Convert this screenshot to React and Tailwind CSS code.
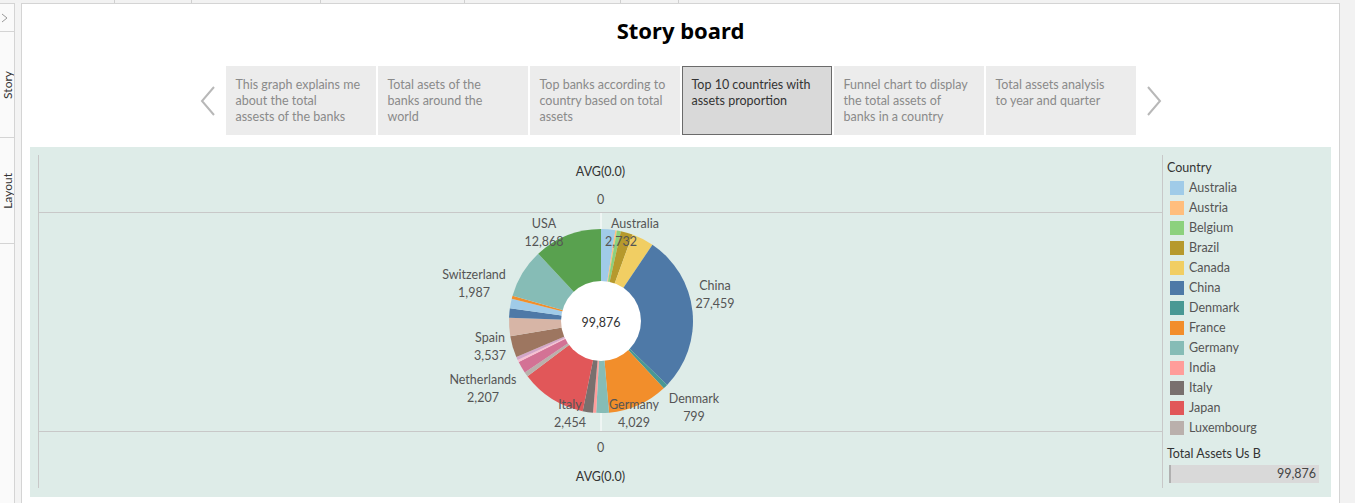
import React from 'react';

const FONT = "font-['Lato','Noto_Sans',sans-serif]";

const storyPoints = [
  ['This graph explains me', 'about the total', 'assests of the banks'],
  ['Total asets of the', 'banks around the', 'world'],
  ['Top banks according to', 'country based on total', 'assets'],
  ['Top 10 countries with', 'assets proportion'],
  ['Funnel chart to display', 'the total assets of', 'banks in a country'],
  ['Total assets analysis', 'to year and quarter'],
];

const legend = [
  ['Australia', '#a0cbe8'],
  ['Austria', '#ffbe7d'],
  ['Belgium', '#8cd17d'],
  ['Brazil', '#b6992d'],
  ['Canada', '#f1ce63'],
  ['China', '#4e79a7'],
  ['Denmark', '#499894'],
  ['France', '#f28e2b'],
  ['Germany', '#86bcb6'],
  ['India', '#ff9d9a'],
  ['Italy', '#79706e'],
  ['Japan', '#e15759'],
  ['Luxembourg', '#bab0ac'],
];

// slice boundaries in degrees, clockwise from 12 o'clock
const slices = [
  [0, 9, '#a0cbe8'],
  [9, 10, '#ffbe7d'],
  [10, 12.5, '#8cd17d'],
  [12.5, 20, '#b6992d'],
  [20, 34, '#f1ce63'],
  [34, 134, '#4e79a7'],
  [134, 137, '#499894'],
  [137, 175, '#f28e2b'],
  [175, 183, '#86bcb6'],
  [183, 185, '#ff9d9a'],
  [185, 191.5, '#79706e'],
  [191.5, 233, '#e15759'],
  [233, 236, '#bab0ac'],
  [236, 243.5, '#d37295'],
  [243.5, 245, '#fabfd2'],
  [245, 247, '#d4a6c8'],
  [247, 260.5, '#9d7660'],
  [260.5, 272, '#d7b5a6'],
  [272, 278, '#4e79a7'],
  [278, 284, '#a0cbe8'],
  [284, 286, '#f28e2b'],
  [286, 317, '#86bcb6'],
  [317, 360, '#59a14f'],
];

const labels = [
  ['USA', '12,868', 143, 12],
  ['Australia', '2,732', 234, 12, 220],
  ['China', '27,459', 314, 74],
  ['Switzerland', '1,987', 73, 63],
  ['Spain', '3,537', 89, 126],
  ['Netherlands', '2,207', 82, 168],
  ['Italy', '2,454', 169, 193],
  ['Germany', '4,029', 233, 193],
  ['Denmark', '799', 293, 187],
];

const cx = 200;
const cy = 108;
const oR = 92;
const iR = 40;
const RADIAN = Math.PI / 180;

function slicePath(a0, a1) {
  const pt = (a) => [cx + oR * Math.sin(a * RADIAN), cy - oR * Math.cos(a * RADIAN)];
  const [x0, y0] = pt(a0);
  const [x1, y1] = pt(a1);
  const large = a1 - a0 > 180 ? 1 : 0;
  return `M${cx} ${cy} L${x0} ${y0} A${oR} ${oR} 0 ${large} 1 ${x1} ${y1} Z`;
}

function Chevron({ dir }) {
  return (
    <svg width="16" height="30" viewBox="0 0 16 30">
      <path
        d={dir === 'left' ? 'M14 1 L2 15 L14 29' : 'M2 1 L14 15 L2 29'}
        fill="none"
        stroke="#b8b8b8"
        strokeWidth="2"
      />
    </svg>
  );
}

function DonutChart() {
  return (
    <svg width="400" height="218" viewBox="0 0 400 218">
      <line x1="200" y1="0" x2="200" y2="218" stroke="#ffffff" strokeWidth="1" />
      {slices.map(([a0, a1, color], i) => (
        <path key={i} d={slicePath(a0, a1)} fill={color} />
      ))}
      <circle cx={cx} cy={cy} r={iR} fill="#ffffff" />
      <text x={cx} y={cy + 3} textAnchor="middle" dominantBaseline="middle" fontSize="12.5" fill="#333">
        99,876
      </text>
      {labels.map(([name, value, x, y, vx]) => (
        <g key={name} fontSize="12.5" fill="#555" textAnchor="middle">
          <text x={x} y={y} dominantBaseline="middle">{name}</text>
          <text x={vx || x} y={y + 18} dominantBaseline="middle">{value}</text>
        </g>
      ))}
    </svg>
  );
}

function SideTab({ label, className }) {
  return (
    <div className={`flex items-center justify-center overflow-hidden border-b border-[#d4d4d4] ${className}`}>
      <span className="[writing-mode:vertical-rl] rotate-180 text-[12px] leading-[13px] text-[#333] whitespace-nowrap">
        {label}
      </span>
    </div>
  );
}

export default function App() {
  const ticks = [114, 191, 320, 464, 620, 678];

  return (
    <div className={`w-[1355px] h-[503px] bg-[#f2f2f2] flex flex-col overflow-hidden ${FONT}`}>
      {/* top strip */}
      <div className="h-[3px] relative">
        {ticks.map((x) => (
          <div key={x} className="absolute top-0 h-[3px] w-px bg-[#d0d0d0]" style={{ left: x }} />
        ))}
      </div>

      <div className="flex flex-1 min-h-0">
        {/* side tabs */}
        <div className="w-[15px] bg-[#fafafa] border-r border-t border-[#d4d4d4] flex flex-col">
          <div className="h-[28px] flex items-center justify-start pl-[1px] border-b border-[#d4d4d4] overflow-hidden">
            <svg width="8" height="10" viewBox="0 0 8 10">
              <path d="M1 1 L6 5 L1 9" fill="none" stroke="#999" strokeWidth="1" />
            </svg>
          </div>
          <SideTab label="Story" className="h-[106px]" />
          <SideTab label="Layout" className="h-[106px]" />
        </div>
        <div className="w-[7px] bg-[#f3f3f3] border-r border-[#d4d4d4]" />

        {/* main story panel */}
        <div className="w-[1318px] bg-white border-t border-r border-[#d4d4d4] flex flex-col">
          <div className="mt-[12px] h-[28px] leading-[28px] text-center text-[22px] font-bold text-black font-['Noto_Sans',sans-serif]">
            Story board
          </div>

          {/* story points */}
          <div className="mt-[22px] h-[69px] flex items-center justify-center">
            <div className="mr-[10px] flex items-center">
              <Chevron dir="left" />
            </div>
            <div className="flex gap-[2px] h-full">
              {storyPoints.map((lines, i) => {
                const active = i === 3;
                return (
                  <div
                    key={i}
                    className={
                      active
                        ? 'w-[150px] h-full bg-[#d9d9d9] border border-[#6b6b6b] pl-[9px] pt-[10px] text-[#333]'
                        : 'w-[150px] h-full bg-[#ececec] pl-[10px] pt-[11px] text-[#8a8a8a]'
                    }
                  >
                    {lines.map((l) => (
                      <div key={l} className="text-[12.5px] leading-[16px] whitespace-nowrap">
                        {l}
                      </div>
                    ))}
                  </div>
                );
              })}
            </div>
            <div className="ml-[10px] flex items-center">
              <Chevron dir="right" />
            </div>
          </div>

          {/* viz */}
          <div className="mt-[12px] mx-[8px] h-[350px] bg-[#deece8] pl-[8px] pt-[8px] pb-[9px] flex">
            <div className="w-[1125px] h-full border-l border-r border-[#c8c8c8] flex flex-col">
              <div className="h-[58px] border-b border-[#c8c8c8] flex flex-col items-center text-[12.5px]">
                <div className="mt-[8px] h-[18px] leading-[18px] text-[#333]">AVG(0.0)</div>
                <div className="mt-[10px] h-[18px] leading-[18px] text-[#555]">0</div>
              </div>
              <div className="h-[219px] border-b border-[#c8c8c8] flex justify-center">
                <DonutChart />
              </div>
              <div className="flex-1 flex flex-col items-center text-[12.5px]">
                <div className="mt-[7px] h-[18px] leading-[18px] text-[#555]">0</div>
                <div className="mt-[11px] h-[18px] leading-[18px] text-[#333]">AVG(0.0)</div>
              </div>
            </div>

            {/* legend */}
            <div className="w-[168px] flex flex-col pl-[4px]">
              <div className="mt-[5px] h-[16px] leading-[16px] text-[12.5px] text-[#333]">Country</div>
              <div className="mt-[2px] flex flex-col">
                {legend.map(([name, color]) => (
                  <div key={name} className="h-[20px] flex items-center">
                    <div className="ml-[3px] w-[14px] h-[14px]" style={{ backgroundColor: color }} />
                    <span className="ml-[5px] text-[12.5px] text-[#555]">{name}</span>
                  </div>
                ))}
              </div>
              <div className="mt-[8px] h-[16px] leading-[16px] text-[12.5px] text-[#333]">Total Assets Us B</div>
              <div className="mt-[3px] ml-[2px] w-[150px] h-[18px] bg-[#d9d9d9] border-l-2 border-[#b0b0b0] flex items-center justify-end pr-[3px] text-[12.5px] text-[#444]">
                99,876
              </div>
            </div>
          </div>
        </div>
      </div>
    </div>
  );
}
